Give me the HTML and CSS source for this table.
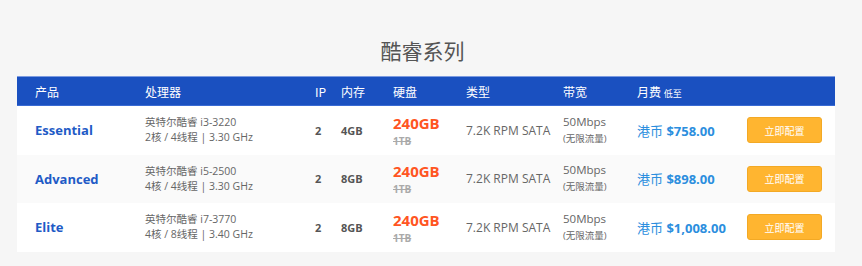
FILE: index.html
```html
<!DOCTYPE html>
<html lang="zh">
<head>
<meta charset="utf-8">
<title>酷睿系列</title>
<link rel="stylesheet" href="styles.css">
</head>
<body>
<div class="wrap">
  <h2 class="title">酷睿系列</h2>
  <div class="table">
    <div class="row head">
      <div>产品</div>
      <div>处理器</div>
      <div>IP</div>
      <div>内存</div>
      <div>硬盘</div>
      <div>类型</div>
      <div>带宽</div>
      <div>月费 <small>低至</small></div>
      <div></div>
    </div>
    <div class="row">
      <div class="name">Essential</div>
      <div class="cpu">英特尔酷睿 i3-3220<br>2核 / 4线程 | 3.30 GHz</div>
      <div class="bold">2</div>
      <div class="bold">4GB</div>
      <div class="disk"><span class="big">240GB</span><s>1TB</s></div>
      <div class="type">7.2K RPM SATA</div>
      <div class="bw">50Mbps<br><span>(无限流量)</span></div>
      <div class="price">港币 <b>$758.00</b></div>
      <div><a class="btn">立即配置</a></div>
    </div>
    <div class="row alt">
      <div class="name">Advanced</div>
      <div class="cpu">英特尔酷睿 i5-2500<br>4核 / 4线程 | 3.30 GHz</div>
      <div class="bold">2</div>
      <div class="bold">8GB</div>
      <div class="disk"><span class="big">240GB</span><s>1TB</s></div>
      <div class="type">7.2K RPM SATA</div>
      <div class="bw">50Mbps<br><span>(无限流量)</span></div>
      <div class="price">港币 <b>$898.00</b></div>
      <div><a class="btn">立即配置</a></div>
    </div>
    <div class="row">
      <div class="name">Elite</div>
      <div class="cpu">英特尔酷睿 i7-3770<br>4核 / 8线程 | 3.40 GHz</div>
      <div class="bold">2</div>
      <div class="bold">8GB</div>
      <div class="disk"><span class="big">240GB</span><s>1TB</s></div>
      <div class="type">7.2K RPM SATA</div>
      <div class="bw">50Mbps<br><span>(无限流量)</span></div>
      <div class="price">港币 <b>$1,008.00</b></div>
      <div><a class="btn">立即配置</a></div>
    </div>
  </div>
</div>
</body>
</html>
```
FILE: styles.css
```css
html, body {
  margin: 0;
  padding: 0;
  background: #f6f6f6;
}
body {
  font-family: "Open Sans", "Noto Sans CJK SC", sans-serif;
  color: #555;
}
.wrap {
  width: 818px;
  margin-left: 17px;
}
.title {
  margin: 0;
  padding-top: 36px;
  height: 40px;
  text-align: center;
  font-weight: normal;
  font-size: 21px;
  line-height: 28px;
  color: #555;
  font-family: "Noto Sans CJK SC", sans-serif;
  padding-right: 7px;
}
.table {
  background: #fff;
}
.row {
  display: grid;
  grid-template-columns: 110px 170px 26px 52px 73px 97px 74px 110px 1fr;
  align-items: center;
  padding-left: 18px;
  height: 48.5px;
  background: #fff;
}
.row.alt {
  background: #fafafa;
}
.row.head {
  height: 30px;
  background: #1a50c0;
  border-top: 1px solid #7d9be0;
  border-bottom: 1px solid #3a6bd4;
  color: #fff;
  font-size: 12px;
  font-family: "Noto Sans CJK SC", sans-serif;
  box-sizing: border-box;
}
.row.head small {
  font-size: 9px;
}
.name {
  color: #1f5bc6;
  font-weight: bold;
  font-size: 13px;
}
.cpu {
  font-size: 10.5px;
  line-height: 15px;
  color: #666;
}
.bold {
  font-weight: bold;
  font-size: 11px;
  color: #555;
}
.disk {
  display: flex;
  flex-direction: column;
  align-items: flex-start;
}
.disk .big {
  display: block;
  color: #ff5522;
  font-weight: bold;
  font-size: 15px;
  line-height: 21px;
}
.disk s {
  display: block;
  color: #aaa;
  font-size: 10px;
  font-weight: bold;
  line-height: 14px;
}
.type {
  font-size: 12px;
  color: #666;
}
.bw {
  font-size: 11.5px;
  line-height: 16px;
  color: #666;
}
.bw span {
  font-size: 9.5px;
}
.price {
  color: #2b8ede;
  font-size: 13px;
}
.price b {
  font-weight: bold;
}
.btn {
  display: flex;
  align-items: center;
  justify-content: center;
  width: 75px;
  height: 26px;
  box-sizing: border-box;
  background: #ffb530;
  border: 1px solid #f3a925;
  border-radius: 3px;
  color: #fff;
  font-size: 10px;
  font-family: "Noto Sans CJK SC", sans-serif;
}
```
